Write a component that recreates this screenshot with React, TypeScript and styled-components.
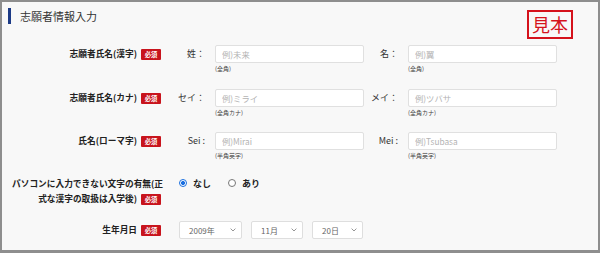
import styled, { createGlobalStyle } from 'styled-components'

const GlobalStyle = createGlobalStyle`
  html, body {
    margin: 0;
    padding: 0;
  }
  body {
    font-family: "Noto Sans CJK JP", "Noto Sans", sans-serif;
    background: #ffffff;
  }
`

const Chevron = () => (
  <svg width="6" height="4" viewBox="0 0 6 4">
    <path d="M0.6 0.6 L3 3 L5.4 0.6" fill="none" stroke="#8a8a8a" strokeWidth="0.9" />
  </svg>
)

const App = () => {
  return (
    <>
      <GlobalStyle />
      <Frame>
        <Header>
          <TitleGroup>
            <TitleBar />
            <Title>志願者情報入力</Title>
          </TitleGroup>
          <Stamp>見本</Stamp>
        </Header>
        <Form>
          <Row>
            <Label>
              志願者氏名(漢字)<Badge>必須</Badge>
            </Label>
            <Content>
              <Field>
                <SubLabel>姓：</SubLabel>
                <InputBox>
                  <TextInput placeholder="例)未来" />
                  <Hint>(全角)</Hint>
                </InputBox>
              </Field>
              <Field>
                <SubLabel>名：</SubLabel>
                <InputBox>
                  <TextInput placeholder="例)翼" />
                  <Hint>(全角)</Hint>
                </InputBox>
              </Field>
            </Content>
          </Row>
          <Row>
            <Label>
              志願者氏名(カナ)<Badge>必須</Badge>
            </Label>
            <Content>
              <Field>
                <SubLabel>セイ：</SubLabel>
                <InputBox>
                  <TextInput placeholder="例)ミライ" />
                  <Hint>(全角カナ)</Hint>
                </InputBox>
              </Field>
              <Field>
                <SubLabel>メイ：</SubLabel>
                <InputBox>
                  <TextInput placeholder="例)ツバサ" />
                  <Hint>(全角カナ)</Hint>
                </InputBox>
              </Field>
            </Content>
          </Row>
          <Row>
            <Label>
              氏名(ローマ字)<Badge>必須</Badge>
            </Label>
            <Content>
              <Field>
                <SubLabel>Sei :</SubLabel>
                <InputBox>
                  <TextInput placeholder="例)Mirai" />
                  <Hint>(半角英字)</Hint>
                </InputBox>
              </Field>
              <Field>
                <SubLabel>Mei :</SubLabel>
                <InputBox>
                  <TextInput placeholder="例)Tsubasa" />
                  <Hint>(半角英字)</Hint>
                </InputBox>
              </Field>
            </Content>
          </Row>
          <Row>
            <Label $multi>
              パソコンに入力できない文字の有無(正
              <br />
              式な漢字の取扱は入学後)<Badge>必須</Badge>
            </Label>
            <RadioGroup>
              <RadioOption>
                <RadioMark $checked />
                なし
              </RadioOption>
              <RadioOption>
                <RadioMark />
                あり
              </RadioOption>
            </RadioGroup>
          </Row>
          <Row>
            <Label>
              生年月日<Badge>必須</Badge>
            </Label>
            <SelectGroup>
              <Select $width={63}>
                2009年
                <Chevron />
              </Select>
              <Select $width={52}>
                11月
                <Chevron />
              </Select>
              <Select $width={51}>
                20日
                <Chevron />
              </Select>
            </SelectGroup>
          </Row>
        </Form>
      </Frame>
    </>
  )
}

export default App

const Frame = styled.div`
  box-sizing: border-box;
  width: 600px;
  height: 253px;
  border: 2px solid #8e8e8e;
  border-bottom-width: 3px;
  background: #f8f8f8;
  overflow: hidden;
`

const Header = styled.div`
  display: flex;
  justify-content: space-between;
  align-items: flex-start;
  padding: 6px 25px 0 6px;
`

const TitleGroup = styled.div`
  display: flex;
  align-items: center;
  gap: 9px;
`

const TitleBar = styled.div`
  width: 3px;
  height: 16px;
  background: #1c3a86;
`

const Title = styled.div`
  font-size: 11px;
  line-height: 16px;
  color: #333333;
`

const Stamp = styled.div`
  margin-top: 2px;
  padding: 0 3px;
  height: 29px;
  box-sizing: border-box;
  border: 2px solid #d5121c;
  color: #d5121c;
  font-size: 18px;
  line-height: 25px;
`

const Form = styled.div`
  display: flex;
  flex-direction: column;
  gap: 15.5px;
  padding-top: 6px;
`

const Row = styled.div`
  display: grid;
  grid-template-columns: 149px 1fr;
  column-gap: 16px;
  align-items: start;
  padding-left: 10px;
`

const Label = styled.div<{ $multi?: boolean }>`
  text-align: right;
  font-size: 8.7px;
  font-weight: 700;
  color: #222222;
  line-height: ${(p) => (p.$multi ? '15px' : '18px')};
  white-space: nowrap;
`

const Badge = styled.span`
  display: inline-block;
  width: 20px;
  height: 11px;
  margin-left: 4px;
  border-radius: 1px;
  background: #c8141d;
  color: #ffffff;
  font-size: 6.3px;
  font-weight: 700;
  line-height: 11px;
  text-align: center;
  vertical-align: middle;
`

const Content = styled.div`
  display: flex;
  gap: 6px;
`

const Field = styled.div`
  display: flex;
  align-items: flex-start;
`

const SubLabel = styled.div`
  width: 28px;
  margin-right: 10px;
  text-align: right;
  font-size: 9px;
  line-height: 18px;
  color: #333333;
  white-space: nowrap;
`

const InputBox = styled.div`
  display: flex;
  flex-direction: column;
`

const TextInput = styled.input`
  box-sizing: border-box;
  width: 149px;
  height: 18px;
  margin: 0;
  padding: 0 0 0 6px;
  border: 1px solid #e0e0e0;
  border-radius: 2px;
  background: #ffffff;
  font-family: inherit;
  font-size: 8.3px;
  color: #333333;
  outline: none;

  &::placeholder {
    color: #b3b3b3;
  }
`

const Hint = styled.div`
  margin-top: 1px;
  font-size: 6px;
  line-height: 9px;
  color: #444444;
`

const RadioGroup = styled.div`
  display: flex;
  align-items: center;
  gap: 17px;
  height: 15px;
  padding-left: 2px;
`

const RadioOption = styled.label`
  display: flex;
  align-items: center;
  gap: 6px;
  font-size: 9px;
  font-weight: 700;
  color: #222222;
`

const RadioMark = styled.span<{ $checked?: boolean }>`
  box-sizing: border-box;
  width: 8px;
  height: 8px;
  border-radius: 50%;
  border: 1px solid ${(p) => (p.$checked ? '#1a6fe0' : '#777777')};
  background: ${(p) =>
    p.$checked ? 'radial-gradient(circle, #1a6fe0 0 45%, #ffffff 52%)' : '#ffffff'};
`

const SelectGroup = styled.div`
  display: flex;
  gap: 9px;
  padding-left: 2px;
`

const Select = styled.div<{ $width: number }>`
  box-sizing: border-box;
  display: flex;
  align-items: center;
  justify-content: space-between;
  width: ${(p) => p.$width}px;
  height: 18px;
  padding: 0 5px 0 9px;
  border: 1px solid #dedede;
  border-radius: 2px;
  background: #ffffff;
  font-size: 8px;
  color: #666666;
`
